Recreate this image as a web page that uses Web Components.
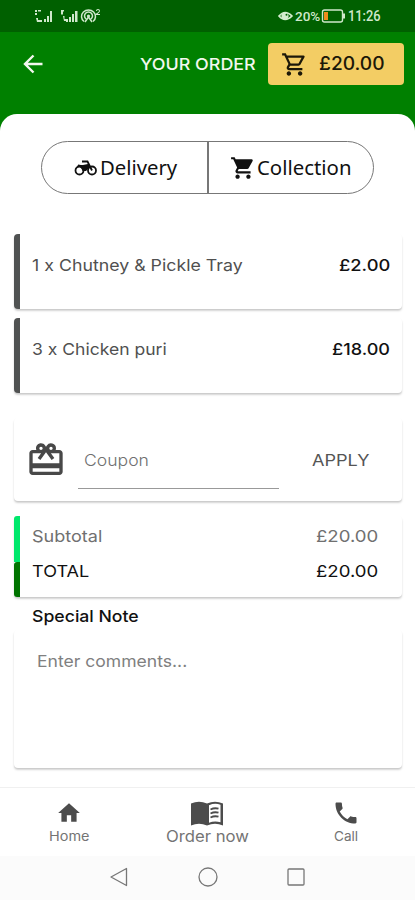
<!DOCTYPE html>
<html lang="en">
<head>
<meta charset="utf-8">
<meta name="viewport" content="width=device-width, initial-scale=1">
<title>Your order</title>
<style>
html, body { margin: 0; background: #fff; }
body { width: 415px; height: 900px; overflow: hidden; font-family: Inter, "Liberation Sans", sans-serif; }
</style>
</head>
<body>
<order-app></order-app>
<script>
function define(name, html) {
  const t = document.createElement('template');
  t.innerHTML = html;
  customElements.define(name, class extends HTMLElement {
    constructor() {
      super();
      this.attachShadow({ mode: 'open' }).appendChild(t.content.cloneNode(true));
    }
  });
}

/* A single-line label whose glyphs are widened to the width given in "w". */
class WideText extends HTMLElement {
  constructor() {
    super();
    this.attachShadow({ mode: 'open' }).innerHTML =
      '<style>:host{display:block;flex:none;line-height:20px;height:20px;white-space:nowrap}' +
      'span{display:inline-block;transform-origin:0 50%}</style><span></span>';
  }
  connectedCallback() {
    const s = this.shadowRoot.querySelector('span');
    s.textContent = this.getAttribute('text');
    const w = +this.getAttribute('w');
    this.style.width = w + 'px';
    this.style.fontSize = (this.getAttribute('size') || 16.5) + 'px';
    s.style.transform = 'scaleX(' + w / s.offsetWidth + ')';
  }
}
customElements.define('wide-text', WideText);

define('status-bar', `
<style>
:host{display:flex;height:32px;background:#006000;color:#cfe8cb;box-sizing:border-box;padding:0 34px 0 34px;align-items:center;justify-content:space-between}
div{display:flex;align-items:center}
wide-text{font-family:Roboto,sans-serif;font-weight:500}
</style>
<div>
<svg width="68" height="18" viewBox="0 0 68 18" fill="#cfe8cb">
<path d="M1 3h2v2H1zM4 3h3v1.500H4zM1 6h2v2H1zM2 11h2v2h4v2H3zM10 12h2v3h-2zM13 9h2v6h-2zM16 4h2v11h-2z"/>
<path d="M27 3h3v1.500h-1v3h-2zM29 9h1.500v3h2v2H30zM32 12h2v3h-2zM35 10h2v5h-2zM38 7h2v8h-2zM41 4h2.500v11H41z"/>
<g fill="none" stroke="#cfe8cb" stroke-width="1.500"><path d="M50 14.500a7 6.500 0 1 1 9 0M52 12a4 4 0 1 1 5 0M51 15l3.500-5 3.500 5"/></g>
<circle cx="54.500" cy="9" r="1.600"/><path d="M62 4q0-2 2-2t2 2q0 1-2.500 3H66v1h-4.500V7Q65 5 65 4q0-1-1-1t-1 1z"/>
</svg></div>
<div>
<svg width="18" height="14" viewBox="0 0 18 14"><path d="M2 7q6-7 13 0-7 7-13 0z" fill="none" stroke="#d5edcf" stroke-width="1.700"/><circle cx="8" cy="7" r="3.600" fill="#d5edcf"/><circle cx="9.500" cy="5.800" r="1" fill="#006000"/></svg>
<wide-text text="20%" w="25" size="13.500"></wide-text>
<svg width="28" height="18" viewBox="0 0 28 18"><rect x="2.500" y="3" width="20" height="12" rx="2" fill="none" stroke="#cfe8cb" stroke-width="1.400"/><path d="M23 6.500h2v5h-2z" fill="#cfe8cb"/><path d="M4 5h4v8H4z" fill="#f08c1c"/></svg>
<wide-text text="11:26" w="33" size="14"></wide-text>
</div>`);

define('order-header', `
<style>
:host{display:flex;height:64px;align-items:center;box-sizing:border-box;padding:0 10px 0 21px;color:#f2f8ee}
.title{margin-left:95px}
.basket{margin-left:12px;width:136px;height:42px;border-radius:4px;background:#f3cd64;color:#1c1808;display:flex;align-items:center;box-sizing:border-box;padding-left:13px}
.basket wide-text{margin-left:11px}
</style>
<svg width="24" height="24" viewBox="0 0 24 24" fill="none" stroke="#f2f8ee" stroke-width="2.400"><path d="M21.500 12H4M12.500 3.500 4 12l8.500 8.500"/></svg>
<wide-text class="title" text="YOUR ORDER" w="116" size="16.500" style="font-weight:500"></wide-text>
<div class="basket">
<svg width="27" height="27" viewBox="0 0 24 24" fill="#1c1808"><path d="M15.550 13c.75 0 1.410-.41 1.750-1.030l3.580-6.490A.996.996 0 0 0 20.010 4H5.210l-.94-2H1v2h2l3.600 7.590-1.350 2.440C4.520 15.370 5.480 17 7 17h12v-2H7l1.100-2h7.450zM6.160 6h12.150l-2.760 5H8.530L6.160 6zM7 18c-1.100 0-1.990.9-1.990 2S5.900 22 7 22s2-.9 2-2-.9-2-2-2zm10 0c-1.100 0-1.990.9-1.990 2s.89 2 1.990 2 2-.9 2-2-.9-2-2-2z"/></svg>
<wide-text text="£20.00" w="66" size="18" style="font-weight:450"></wide-text>
</div>`);

define('method-switch', `
<style>
:host{display:flex;width:333px;height:53px;margin:0 0 0 41px;border:1px solid #777;border-radius:27px;box-sizing:border-box;color:#111;font-family:"Noto Sans",sans-serif}
div{display:flex;align-items:center;box-sizing:border-box}
.a{width:167px;border-right:2px solid #777;padding-left:31px}
.b{flex:1;padding-left:21px}
</style>
<div class="a">
<svg width="25" height="18" viewBox="0 0 25 18" fill="none" stroke="#111"><circle cx="6.500" cy="11.500" r="4" stroke-width="1.800"/><circle cx="19" cy="11.500" r="4" stroke-width="1.800"/><path d="M9 2.500h5.500l4.500 9M5 6.500l4 .5 3 2 5-3.500" stroke-width="1.800"/><path d="M4 6.800 10 6l5-1 2 3-4 4H9.500Q8.500 8 4 6.800z" fill="#111" stroke="none"/></svg>
<wide-text text="Delivery" w="77" size="19.500" style="margin-left:2px"></wide-text></div>
<div class="b">
<svg width="26" height="26" viewBox="0 0 24 24" fill="#111"><path d="M7 18c-1.100 0-1.990.9-1.990 2S5.900 22 7 22s2-.9 2-2-.9-2-2-2zM1 2v2h2l3.600 7.590-1.350 2.450C5.090 14.320 5 14.650 5 15c0 1.100.9 2 2 2h12v-2H7.420c-.14 0-.25-.11-.25-.25l.03-.12.900-1.630h7.450c.75 0 1.410-.41 1.750-1.030l3.580-6.490A1 1 0 0 0 20 4H5.210l-.94-2H1zm16 16c-1.100 0-1.990.9-1.990 2s.89 2 1.990 2 2-.9 2-2-.9-2-2-2z"/></svg>
<wide-text text="Collection" w="94" size="19.500" style="margin-left:1px"></wide-text></div>`);

define('shadow-card', `
<style>
:host{display:block;box-sizing:border-box;margin:0 13px 0 14px;border-radius:4px;background:#fff;box-shadow:0 2px 2px rgba(0,0,0,.17),0 1px 1px rgba(0,0,0,.05)}
</style><slot></slot>`);

define('order-item', `
<style>
:host{display:block;margin-bottom:9px}
shadow-card{height:75px;border-left:6px solid #505252;padding:21px 12px 0 12px}
div{display:flex;justify-content:space-between;color:#505050}
::slotted([slot=price]){color:#111;font-weight:500}
</style>
<shadow-card><div><slot name="name"></slot><slot name="price"></slot></div></shadow-card>`);

define('coupon-form', `
<style>
:host{display:block}
shadow-card{height:83px}
div{display:flex;height:83px;align-items:center;color:#555}
.field{width:201px;height:58px;margin-left:12px;border-bottom:1px solid #999;box-sizing:border-box;padding:1px 0 0 6px;align-self:flex-start;margin-top:12.500px;color:#707070}
svg{margin-left:12px}
</style>
<shadow-card><div>
<svg width="40" height="40" viewBox="0 0 24 24" fill="#484848"><path d="M20 6h-2.180c.11-.31.18-.65.18-1a2.996 2.996 0 0 0-5.500-1.650l-.5.670-.5-.680C10.960 2.540 10.050 2 9 2 7.340 2 6 3.340 6 5c0 .35.070.69.180 1H4c-1.110 0-1.990.89-1.990 2L2 19c0 1.110.89 2 2 2h16c1.110 0 2-.89 2-2V8c0-1.110-.89-2-2-2zm-5-2c.55 0 1 .45 1 1s-.45 1-1 1-1-.45-1-1 .45-1 1-1zM9 4c.55 0 1 .45 1 1s-.45 1-1 1-1-.45-1-1 .45-1 1-1zm11 15H4v-2h16v2zm0-5H4V8h5.080L7 10.830 8.620 12 12 7.400l3.380 4.600L17 10.830 14.920 8H20v6z"/></svg>
<div class="field"><wide-text text="Coupon" w="65" size="16.500" style="font-weight:350"></wide-text></div>
<wide-text text="APPLY" w="57" size="16.500" style="margin-left:33px"></wide-text>
</div></shadow-card>`);

define('order-totals', `
<style>
:host{display:block}
shadow-card{height:81px;display:flex}
i{display:flex;flex-direction:column;width:6px}
i:before{content:"";height:46px;background:#00e86c;border-radius:3px 0 0 0}
i:after{content:"";flex:1;background:#007400;border-radius:3px 0 0 3px}
section{flex:1;padding:9.500px 24px 0 11.500px}
div{display:flex;justify-content:space-between;height:35px;color:#111}
.sub{color:#707070}
</style>
<shadow-card><i></i><section>
<div class="sub"><wide-text text="Subtotal" w="70"></wide-text><wide-text text="£20.00" w="62"></wide-text></div>
<div><wide-text text="TOTAL" w="57"></wide-text><wide-text text="£20.00" w="62"></wide-text></div>
</section></shadow-card>`);

define('special-note', `
<style>
:host{display:block}
.label{margin:9px 0 4px 32px;color:#111;font-weight:500}
shadow-card{height:138px;padding:21px 0 0 23px;color:#808080}
</style>
<wide-text class="label" text="Special Note" w="107"></wide-text>
<shadow-card><wide-text text="Enter comments..." w="150"></wide-text></shadow-card>`);

define('nav-item', `
<style>
:host{display:flex;flex-direction:column;align-items:center;flex:none;width:138.300px;color:#747474}
</style><slot></slot>`);

define('bottom-nav', `
<style>
:host{display:flex;height:69px;box-sizing:border-box;border-top:1px solid #f0f0f0;background:#fff}
svg{display:block;fill:#4c4c4c}
</style>
<nav-item><svg width="26" height="26" viewBox="0 0 24 24" style="margin-top:12px"><path d="M10 20v-6h4v6h5v-8h3L12 3 2 12h3v8z"/></svg><wide-text text="Home" w="40" size="13"></wide-text></nav-item>
<nav-item><svg width="34" height="26" viewBox="0 0 34 26" style="margin-top:13px"><path d="M1 2.500Q9-1 17 2.500 25-1 33 2.500V24.500Q25 21 17 24.500 9 21 1 24.500z"/><path d="M19 4.200q6-2.700 11.500-.5v17.500q-6-1.700-11.500.5z" fill="#fff"/><path d="M20.500 8.500q4-2 8-.8M20.500 12.500q4-2 8-.8M20.500 16.500q4-2 8-.8" fill="none" stroke="#4c4c4c" stroke-width="1.800"/></svg><wide-text text="Order now" w="83" size="15.500"></wide-text></nav-item>
<nav-item><svg width="28" height="28" viewBox="0 0 24 24" style="margin-top:11px"><path d="M6.620 10.790c1.440 2.830 3.760 5.140 6.590 6.590l2.200-2.200c.27-.27.670-.36 1.020-.24 1.120.37 2.330.57 3.570.57.55 0 1 .45 1 1V20c0 .55-.45 1-1 1C10.610 21 3 13.390 3 4c0-.55.45-1 1-1h3.500c.55 0 1 .45 1 1 0 1.250.2 2.450.57 3.570.11.35.030.74-.25 1.020l-2.200 2.200z"/></svg><wide-text text="Call" w="24" size="13" style="margin-top:-1px"></wide-text></nav-item>`);

define('system-nav', `
<style>
:host{display:flex;height:44px;background:#fbfbfb;justify-content:center;align-items:center;gap:66px;padding-bottom:2px;box-sizing:border-box}
svg{fill:none;stroke:#777;stroke-width:1.300;display:block}
</style>
<svg width="22" height="22" viewBox="0 0 22 22"><path d="M17.500 2.500v17L2 11z" stroke-linejoin="round"/></svg>
<svg width="22" height="22" viewBox="0 0 22 22"><circle cx="11" cy="11" r="9"/></svg>
<svg width="22" height="22" viewBox="0 0 22 22"><rect x="3" y="3" width="16" height="16" rx="1"/></svg>`);

define('order-app', `
<style>
:host{display:flex;flex-direction:column;width:415px;height:900px;background:#008000}
main{flex:1;margin-top:18px;background:#fff;border-radius:17px 17px 0 0;padding-top:27px;box-sizing:border-box}
method-switch{margin-bottom:40px}
coupon-form{margin:25px 0 15px}
</style>
<status-bar></status-bar>
<order-header></order-header>
<main>
<method-switch></method-switch>
<order-item><wide-text slot="name" text="1 x Chutney &amp; Pickle Tray" w="211"></wide-text><wide-text slot="price" text="£2.00" w="51"></wide-text></order-item>
<order-item><wide-text slot="name" text="3 x Chicken puri" w="135"></wide-text><wide-text slot="price" text="£18.00" w="58"></wide-text></order-item>
<coupon-form></coupon-form>
<order-totals></order-totals>
<special-note></special-note>
</main>
<bottom-nav></bottom-nav>
<system-nav></system-nav>`);
</script>
</body>
</html>
